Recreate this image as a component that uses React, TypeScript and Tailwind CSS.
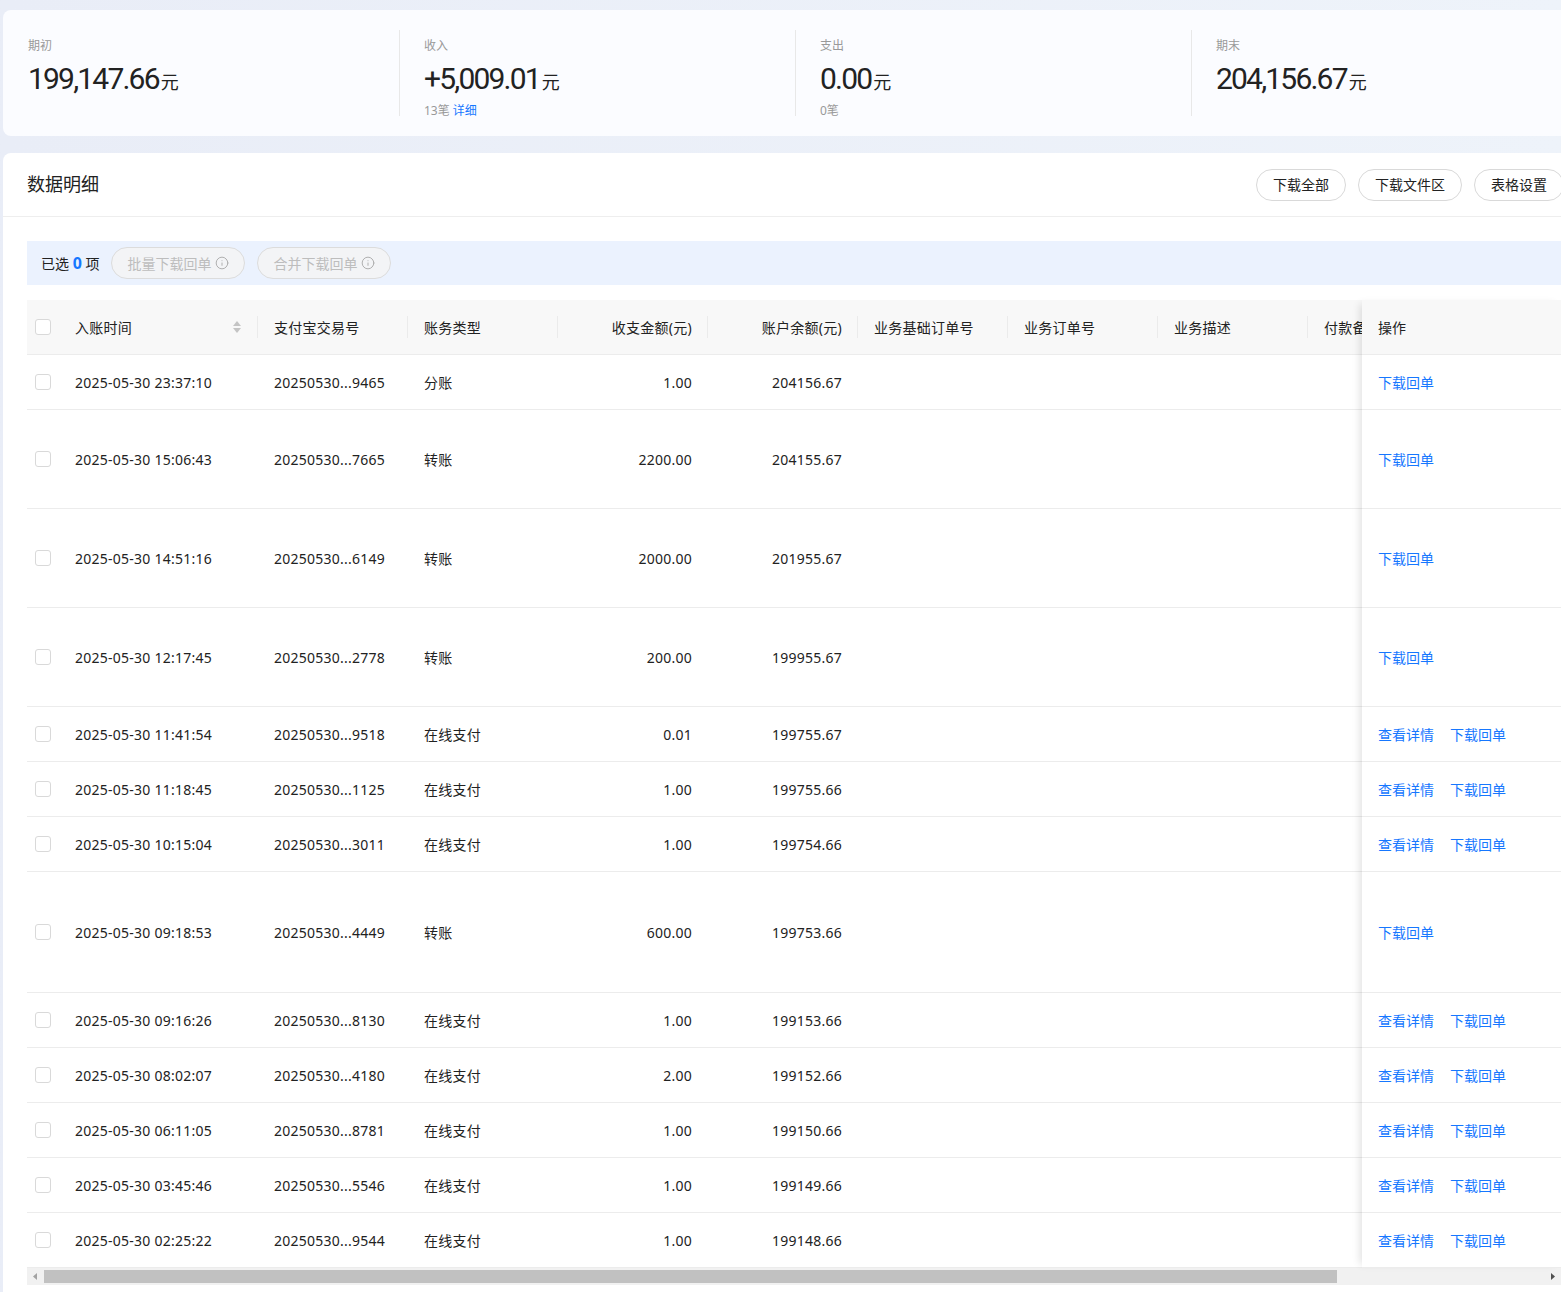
import { Info } from "lucide-react";

type Row = {
  time: string;
  no: string;
  type: string;
  amount: string;
  balance: string;
  h: string;
  detail: boolean;
};

const rows: Row[] = [
  { time: "2025-05-30 23:37:10", no: "20250530...9465", type: "分账", amount: "1.00", balance: "204156.67", h: "h-[55px]", detail: false },
  { time: "2025-05-30 15:06:43", no: "20250530...7665", type: "转账", amount: "2200.00", balance: "204155.67", h: "h-[99px]", detail: false },
  { time: "2025-05-30 14:51:16", no: "20250530...6149", type: "转账", amount: "2000.00", balance: "201955.67", h: "h-[99px]", detail: false },
  { time: "2025-05-30 12:17:45", no: "20250530...2778", type: "转账", amount: "200.00", balance: "199955.67", h: "h-[99px]", detail: false },
  { time: "2025-05-30 11:41:54", no: "20250530...9518", type: "在线支付", amount: "0.01", balance: "199755.67", h: "h-[55px]", detail: true },
  { time: "2025-05-30 11:18:45", no: "20250530...1125", type: "在线支付", amount: "1.00", balance: "199755.66", h: "h-[55px]", detail: true },
  { time: "2025-05-30 10:15:04", no: "20250530...3011", type: "在线支付", amount: "1.00", balance: "199754.66", h: "h-[55px]", detail: true },
  { time: "2025-05-30 09:18:53", no: "20250530...4449", type: "转账", amount: "600.00", balance: "199753.66", h: "h-[121px]", detail: false },
  { time: "2025-05-30 09:16:26", no: "20250530...8130", type: "在线支付", amount: "1.00", balance: "199153.66", h: "h-[55px]", detail: true },
  { time: "2025-05-30 08:02:07", no: "20250530...4180", type: "在线支付", amount: "2.00", balance: "199152.66", h: "h-[55px]", detail: true },
  { time: "2025-05-30 06:11:05", no: "20250530...8781", type: "在线支付", amount: "1.00", balance: "199150.66", h: "h-[55px]", detail: true },
  { time: "2025-05-30 03:45:46", no: "20250530...5546", type: "在线支付", amount: "1.00", balance: "199149.66", h: "h-[55px]", detail: true },
  { time: "2025-05-30 02:25:22", no: "20250530...9544", type: "在线支付", amount: "1.00", balance: "199148.66", h: "h-[55px]", detail: true },
];

const Checkbox = () => (
  <span className="block w-4 h-4 rounded-[3px] border border-[#d9d9d9] bg-white" />
);

const Stat = ({ label, value, sub, divider }: { label: string; value: string; sub?: React.ReactNode; divider?: boolean }) => (
  <div className={`w-[396px] shrink-0 h-[86px] ${divider ? "border-l border-[#e8e8e8] pl-6" : "pl-[25px]"}`}>
    <div className="text-[12px] leading-[14px] text-[#999] mt-[9px]">{label}</div>
    <div className="flex items-baseline mt-[9px] text-[#222]">
      <span className="font-['Roboto',sans-serif] text-[30px] leading-[34px] tracking-[-1.8px]">{value}</span>
      <span className="text-[18px] ml-[2px]">元</span>
    </div>
    {sub && <div className="text-[12px] leading-[14px] text-[#999] mt-[8px]">{sub}</div>}
  </div>
);

const HeadCell = ({ w, children, right, sort }: { w: string; children?: React.ReactNode; right?: boolean; sort?: boolean }) => (
  <div className={`${w} shrink-0 h-full relative flex items-center px-4 ${right ? "justify-end" : ""}`}>
    <span className="whitespace-nowrap">{children}</span>
    {sort && (
      <svg className="absolute right-4" width="10" height="14" viewBox="0 0 10 14">
        <path d="M5 1 L9 6 H1 Z" fill="#c4c4c4" />
        <path d="M5 13 L9 8 H1 Z" fill="#c4c4c4" />
      </svg>
    )}
    <span className="absolute right-0 top-1/2 -translate-y-1/2 w-px h-[22px] bg-[#ebebeb]" />
  </div>
);

export default function App() {
  return (
    <div className="min-h-screen w-full overflow-hidden bg-gradient-to-r from-[#e9edf7] to-[#eef3fa] pt-[10px] pl-[3px] pb-2 font-['Noto_Sans','Noto_Sans_CJK_SC',sans-serif] text-[#333]">
      {/* summary */}
      <div className="w-[1600px] h-[126px] bg-[#fbfcff] rounded-lg flex items-center">
        <div className="flex">
          <Stat label="期初" value="199,147.66" />
          <Stat label="收入" value="+5,009.01" divider sub={<>13笔 <span className="text-[#1677ff]">详细</span></>} />
          <Stat label="支出" value="0.00" divider sub="0笔" />
          <Stat label="期末" value="204,156.67" divider />
        </div>
      </div>

      {/* detail card */}
      <div className="mt-[17px] w-[1585px] bg-white rounded-lg">
        <div className="h-[64px] flex items-center justify-between px-6 border-b border-[#eeeeee]">
          <div className="text-[18px] text-[#222]">数据明细</div>
          <div className="flex gap-3 text-[14px] text-[#222]">
            <button className="h-[32px] px-4 rounded-full border border-[#d9d9d9] bg-white">下载全部</button>
            <button className="h-[32px] px-4 rounded-full border border-[#d9d9d9] bg-white">下载文件区</button>
            <button className="h-[32px] px-4 rounded-full border border-[#d9d9d9] bg-white">表格设置</button>
          </div>
        </div>

        <div className="px-6 pt-[24px]">
          <div className="h-[44px] bg-[#ebf2fe] flex items-center px-[14px] gap-3 text-[14px]">
            <span className="text-[#222]">
              已选 <span className="text-[#1677ff] font-bold text-[16px]">0</span> 项
            </span>
            <span className="h-[32px] px-[15px] rounded-full border border-[#dcdcdc] bg-[#f3f4f6] text-[#bdbdbd] flex items-center gap-1">
              批量下载回单 <Info size={14} strokeWidth={1.6} className="text-[#aaa]" />
            </span>
            <span className="h-[32px] px-[15px] rounded-full border border-[#dcdcdc] bg-[#f3f4f6] text-[#bdbdbd] flex items-center gap-1">
              合并下载回单 <Info size={14} strokeWidth={1.6} className="text-[#aaa]" />
            </span>
          </div>

          {/* table */}
          <div className="mt-[15px] flex text-[14px] text-[#222] tracking-[0.25px]">
            <div className="flex-1 overflow-hidden">
              <div className="w-[1600px]">
                <div className="h-[55px] bg-[#f8f8f8] border-b border-[#ececec] flex items-center">
                  <div className="w-[32px] shrink-0 pl-2"><Checkbox /></div>
                  <HeadCell w="w-[199px]" sort>入账时间</HeadCell>
                  <HeadCell w="w-[150px]">支付宝交易号</HeadCell>
                  <HeadCell w="w-[150px]">账务类型</HeadCell>
                  <HeadCell w="w-[150px]" right>收支金额(元)</HeadCell>
                  <HeadCell w="w-[150px]" right>账户余额(元)</HeadCell>
                  <HeadCell w="w-[150px]">业务基础订单号</HeadCell>
                  <HeadCell w="w-[150px]">业务订单号</HeadCell>
                  <HeadCell w="w-[150px]">业务描述</HeadCell>
                  <HeadCell w="w-[150px]">付款备注</HeadCell>
                </div>
                {rows.map((r) => (
                  <div key={r.time} className={`${r.h} border-b border-[#ececec] flex items-center`}>
                    <div className="w-[32px] shrink-0 pl-2"><Checkbox /></div>
                    <div className="w-[199px] shrink-0 px-4">{r.time}</div>
                    <div className="w-[150px] shrink-0 px-4">{r.no}</div>
                    <div className="w-[150px] shrink-0 px-4">{r.type}</div>
                    <div className="w-[150px] shrink-0 px-4 text-right">{r.amount}</div>
                    <div className="w-[150px] shrink-0 px-4 text-right">{r.balance}</div>
                  </div>
                ))}
              </div>
            </div>

            <div className="w-[202px] shrink-0 relative z-10 bg-white shadow-[-6px_0_8px_-4px_rgba(0,0,0,0.12)] tracking-normal">
              <div className="h-[55px] bg-[#f8f8f8] border-b border-[#ececec] flex items-center px-4">操作</div>
              {rows.map((r) => (
                <div key={r.time} className={`${r.h} border-b border-[#ececec] flex items-center gap-4 px-4 text-[#1677ff]`}>
                  {r.detail && <span>查看详情</span>}
                  <span>下载回单</span>
                </div>
              ))}
            </div>
          </div>

          {/* scrollbar */}
          <div className="h-[17px] bg-[#f1f1f1] flex items-center">
            <svg width="17" height="17" viewBox="0 0 17 17"><path d="M6 8.5 L10 5 V12 Z" fill="#a3a3a3" /></svg>
            <div className="h-[13px] w-[1293px] bg-[#c1c1c1]" />
            <div className="flex-1" />
            <svg width="17" height="17" viewBox="0 0 17 17"><path d="M11 8.5 L7 5 V12 Z" fill="#505050" /></svg>
            <div className="w-[3px]" />
          </div>
          <div className="h-6" />
        </div>
      </div>
    </div>
  );
}
